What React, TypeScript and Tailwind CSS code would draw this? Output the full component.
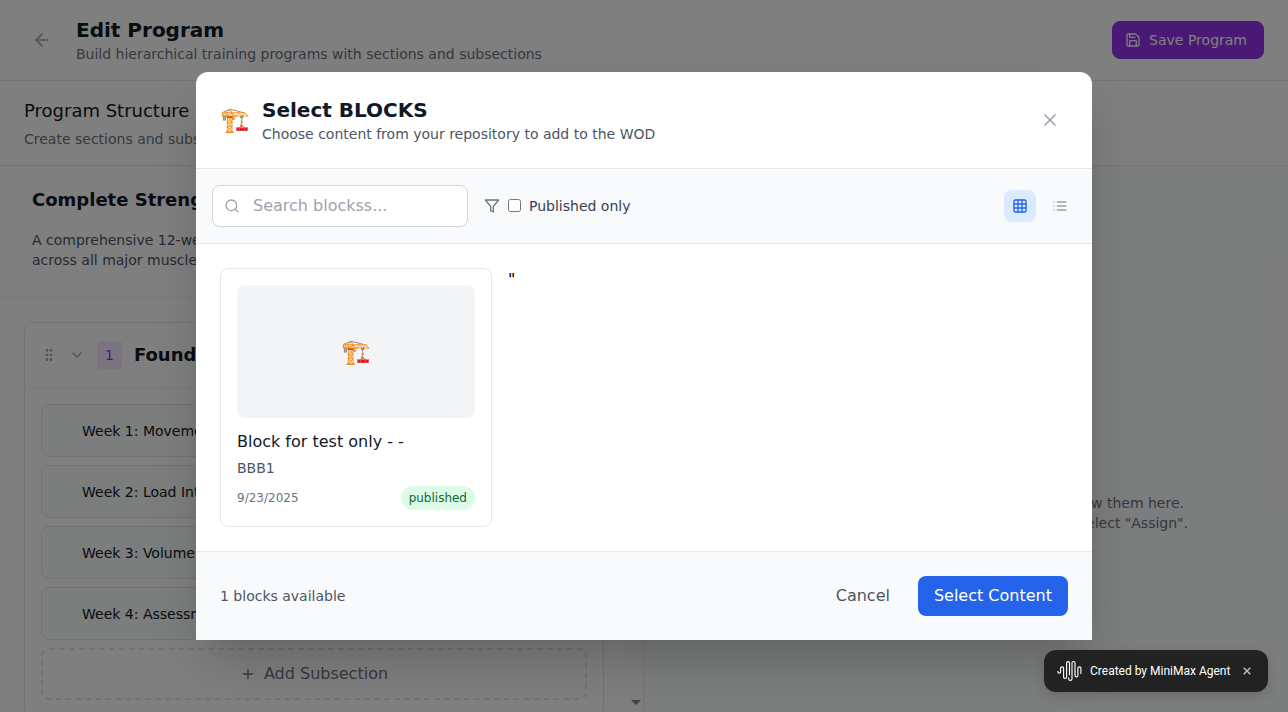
import type { ReactNode } from 'react';
import { ArrowLeft, ChevronDown, GripVertical, Plus, Search, X } from 'lucide-react';

function LineIcon({ children, className }: { children: ReactNode; className: string }) {
  return (
    <svg
      viewBox="0 0 24 24"
      fill="none"
      stroke="currentColor"
      strokeWidth="2"
      strokeLinecap="round"
      strokeLinejoin="round"
      className={className}
    >
      {children}
    </svg>
  );
}

const weeks = ['Week 1: Movement', 'Week 2: Load Intro', 'Week 3: Volume', 'Week 4: Assessment'];

function PageHeader() {
  return (
    <header className="flex h-[81px] shrink-0 items-center justify-between border-b border-[#e5e7eb] bg-white px-6">
      <div className="flex items-center gap-4">
        <button className="p-2 text-[#9ca3af]">
          <ArrowLeft className="size-5" />
        </button>
        <div>
          <h1 className="text-xl font-bold text-[#111827]">Edit Program</h1>
          <p className="text-sm text-[#6b7280]">Build hierarchical training programs with sections and subsections</p>
        </div>
      </div>
      <button className="flex items-center rounded-lg border border-[#9333ea] bg-[#9333ea] px-4 py-2 text-sm text-white">
        <LineIcon className="mr-2 -ml-1 size-4">
          <path d="M15.2 3a2 2 0 0 1 1.4.6l3.8 3.8a2 2 0 0 1 .6 1.4V19a2 2 0 0 1-2 2H5a2 2 0 0 1-2-2V5a2 2 0 0 1 2-2z" />
          <path d="M17 21v-7a1 1 0 0 0-1-1H8a1 1 0 0 0-1 1v7" />
          <path d="M7 3v4a1 1 0 0 0 1 1h7" />
        </LineIcon>
        Save Program
      </button>
    </header>
  );
}

function StructurePanel() {
  return (
    <section className="flex w-[644px] shrink-0 flex-col overflow-hidden border-r border-[#e5e7eb] bg-white">
      <div className="flex min-h-0 flex-1">
        <div className="w-[628px] shrink-0 overflow-hidden">
          <div className="h-[132px] border-b border-[#f3f4f6] px-8 pt-5 whitespace-nowrap">
            <h3 className="text-lg font-bold text-[#111827]">Complete Strength</h3>
            <p className="mt-4 text-sm text-[#4b5563]">
              A comprehensive 12-week
              <br />
              across all major muscles
            </p>
          </div>
          <div className="px-6 pt-6">
            <div className="rounded-lg border border-[#e5e7eb]">
              <div className="flex h-[65px] items-center gap-3 border-b border-[#f3f4f6] px-4">
                <GripVertical className="size-4 text-[#9ca3af]" />
                <ChevronDown className="size-4 text-[#9ca3af]" />
                <span className="rounded bg-[#f3e8ff] px-2 py-1 text-sm text-[#9333ea]">1</span>
                <h4 className="text-lg font-bold text-[#111827]">Foundation</h4>
              </div>
              <div className="flex flex-col gap-2 p-4">
                {weeks.map((week) => (
                  <div
                    key={week}
                    className="flex h-[53px] items-center rounded-lg border border-[#e5e7eb] bg-[#f9fafb] pl-10 text-sm text-[#111827]"
                  >
                    {week}
                  </div>
                ))}
                <button className="flex h-[52px] items-center justify-center gap-2 rounded-lg border-2 border-dashed border-[#e5e7eb] text-[#6b7280]">
                  <Plus className="size-4" />
                  Add Subsection
                </button>
              </div>
            </div>
          </div>
        </div>
        <div className="flex flex-1 items-end justify-center bg-[#fcfcfc] pb-[7px]">
          <svg viewBox="0 0 10 5" className="h-[5px] w-[10px]">
            <path d="M0 0h10L5 5z" fill="#858585" />
          </svg>
        </div>
      </div>
    </section>
  );
}

function AssignPanel() {
  return (
    <section className="flex flex-1 flex-col items-center bg-[#f9fafb] pt-[327px] text-sm text-[#6b7280]">
      <p className="w-[436px] text-right whitespace-nowrap">Assign content to a subsection to view them here.</p>
      <p className="w-[444px] text-right whitespace-nowrap">Click a subsection and select "Assign".</p>
    </section>
  );
}

function BlockCard() {
  return (
    <article className="rounded-lg border border-[#e5e7eb] p-4">
      <div className="mb-3 flex aspect-video items-center justify-center rounded-lg bg-[#f3f4f6] text-2xl">🏗️</div>
      <h3 className="mb-1 text-[#111827]">Block for test only - -</h3>
      <p className="mb-2 text-sm text-[#4b5563]">BBB1</p>
      <div className="flex items-center justify-between text-xs">
        <span className="text-[#6b7280]">9/23/2025</span>
        <span className="rounded-full bg-[#dcfce7] px-2 py-1 text-[#166534]">published</span>
      </div>
    </article>
  );
}

function SelectDialog() {
  return (
    <div className="w-[896px] rounded-xl bg-white shadow-[0_25px_50px_-12px_rgba(0,0,0,0.25)]">
      <div className="flex items-center justify-between border-b border-[#e5e7eb] p-6">
        <div className="flex items-center gap-3">
          <span className="text-2xl">🏗️</span>
          <div>
            <h2 className="text-xl font-bold text-[#111827]">Select BLOCKS</h2>
            <p className="text-sm text-[#4b5563]">Choose content from your repository to add to the WOD</p>
          </div>
        </div>
        <button className="p-2 text-[#9ca3af]">
          <X className="size-5" />
        </button>
      </div>

      <div className="flex items-center justify-between border-b border-[#e5e7eb] bg-[#f9fafb] p-4">
        <div className="flex items-center gap-4">
          <div className="flex h-[42px] w-64 items-center gap-3 rounded-lg border border-[#d1d5db] bg-white pl-[11px] text-[#9ca3af]">
            <Search className="size-4 shrink-0" />
            <input
              className="w-full min-w-0 bg-transparent pl-px text-base outline-none placeholder:text-[#9ca3af]"
              placeholder="Search blockss..."
            />
          </div>
          <div className="flex items-center gap-2">
            <LineIcon className="size-4 text-[#6b7280]">
              <polygon points="22 3 2 3 10 12.46 10 19 14 21 14 12.46 22 3" />
            </LineIcon>
            <label className="flex items-center gap-2 text-sm text-[#374151]">
              <input type="checkbox" className="size-[13px]" />
              Published only
            </label>
          </div>
        </div>
        <div className="flex items-center gap-2">
          <button className="rounded-lg bg-[#dbeafe] p-2 text-[#2563eb]">
            <LineIcon className="size-4">
              <rect width="18" height="18" x="3" y="3" rx="2" />
              <path d="M3 9h18M3 15h18M9 3v18M15 3v18" />
            </LineIcon>
          </button>
          <button className="p-2 text-[#9ca3af]">
            <LineIcon className="size-4">
              <path d="M8 6h13M8 12h13M8 18h13M3 6h.01M3 12h.01M3 18h.01" />
            </LineIcon>
          </button>
        </div>
      </div>

      <div className="grid grid-cols-3 gap-4 p-6">
        <BlockCard />
        <span className="text-black">"</span>
      </div>

      <div className="flex items-center justify-between border-t border-[#e5e7eb] bg-[#f9fafb] p-6">
        <span className="text-sm text-[#4b5563]">1 blocks available</span>
        <div className="flex items-center gap-3">
          <button className="px-4 py-2 text-[#4b5563]">Cancel</button>
          <button className="rounded-lg bg-[#2563eb] px-4 py-2 text-white">Select Content</button>
        </div>
      </div>
    </div>
  );
}

function AgentBadge() {
  return (
    <div className="absolute right-5 bottom-5 flex h-[42px] w-56 items-center rounded-xl bg-[#222222] pl-[13px] font-['Roboto',sans-serif] text-xs text-white shadow-[0_4px_12px_rgba(0,0,0,0.15)]">
      <svg viewBox="0 0 25 22" className="h-[22px] w-[25px]" fill="none" stroke="#fff" strokeWidth="1.15" strokeLinecap="round">
        <path d="M.9 11.2v.5a1.35 1.35 0 0 0 2.7 0V8.3a1.5 1.5 0 0 1 3 0v8.6a1.5 1.5 0 0 0 3 0V3a1.45 1.45 0 0 1 2.9 0v11.8" />
        <path d="M11.6 17.8v1a1.7 1.7 0 0 0 3.4 0V3a1.5 1.5 0 0 1 3 0v12.4a1.45 1.45 0 0 0 2.9 0V8.3a1.5 1.5 0 0 1 3 0v5.2" />
      </svg>
      <span className="ml-2 w-[141px] whitespace-nowrap">Created by MiniMax Agent</span>
      <button className="ml-3 text-[#c8c8c8]">
        <svg viewBox="0 0 8 8" className="size-2" fill="none" stroke="currentColor" strokeWidth="1.3">
          <path d="M.7.7l6.6 6.6M7.3.7L.7 7.3" />
        </svg>
      </button>
    </div>
  );
}

export default function App() {
  return (
    <div className="relative h-[712px] w-[1288px] overflow-hidden bg-white font-['DejaVu_Sans',sans-serif]">
      <div className="flex h-full flex-col">
        <PageHeader />
        <div className="h-[85px] shrink-0 border-b border-[#e5e7eb] bg-white px-6 py-4">
          <h2 className="text-lg text-[#111827]">Program Structure</h2>
          <p className="mt-1 text-sm text-[#6b7280]">Create sections and subsections</p>
        </div>
        <main className="flex min-h-0 flex-1">
          <StructurePanel />
          <AssignPanel />
        </main>
      </div>
      <div className="absolute inset-0 flex items-center justify-center bg-black/50">
        <SelectDialog />
      </div>
      <AgentBadge />
    </div>
  );
}
